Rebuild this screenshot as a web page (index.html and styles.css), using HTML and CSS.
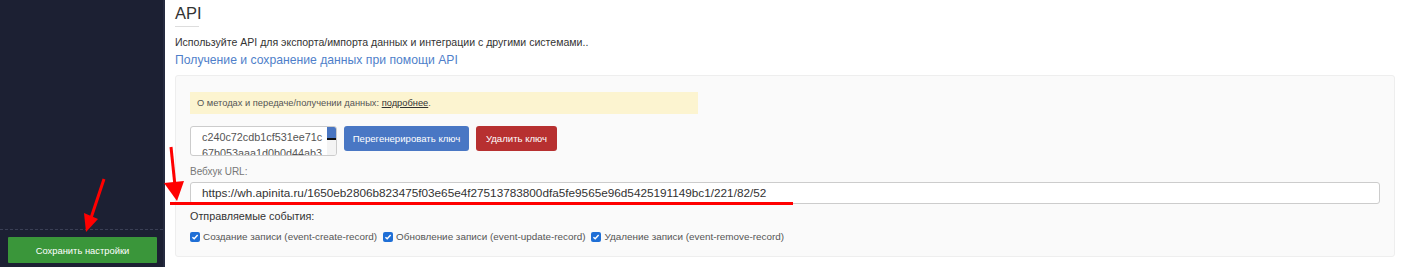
FILE: index.html
```html
<!DOCTYPE html>
<html lang="ru">
<head>
<meta charset="utf-8">
<link rel="stylesheet" href="styles.css">
</head>
<body>
<div class="layout">
  <aside class="sidebar">
    <div class="sidebar-fill"></div>
    <div class="sidebar-footer">
      <button class="btn-save">Сохранить настройки</button>
    </div>
  </aside>
  <main class="main">
    <h2 class="title">API</h2>
    <div class="title-rule"></div>
    <p class="intro">Используйте API для экспорта/импорта данных и интеграции с другими системами..</p>
    <a class="doc-link">Получение и сохранение данных при помощи API</a>
    <section class="panel">
      <div class="alert">О методах и передаче/получении данных: <span class="alert-link">подробнее</span>.</div>
      <div class="key-row">
        <div class="key-box">
          <div class="key-text">c240c72cdb1cf531ee71c<br>67b053aaa1d0b0d44ab3</div>
          <div class="key-scroll"><div class="key-thumb"></div><div class="key-grip"></div></div>
        </div>
        <button class="btn btn-blue">Перегенерировать ключ</button>
        <button class="btn btn-red">Удалить ключ</button>
      </div>
      <div class="label">Вебхук URL:</div>
      <div class="url-input">https://wh.apinita.ru/1650eb2806b823475f03e65e4f27513783800dfa5fe9565e96d5425191149bc1/221/82/52</div>
      <div class="events-title">Отправляемые события:</div>
      <div class="events">
        <label class="event"><span class="cb"><svg viewBox="0 0 10 10" width="8" height="8"><path d="M1.8 5.2 L4 7.3 L8.3 2.6" fill="none" stroke="#fff" stroke-width="1.8"/></svg></span>Создание записи (event-create-record)</label>
        <label class="event"><span class="cb"><svg viewBox="0 0 10 10" width="8" height="8"><path d="M1.8 5.2 L4 7.3 L8.3 2.6" fill="none" stroke="#fff" stroke-width="1.8"/></svg></span>Обновление записи (event-update-record)</label>
        <label class="event"><span class="cb"><svg viewBox="0 0 10 10" width="8" height="8"><path d="M1.8 5.2 L4 7.3 L8.3 2.6" fill="none" stroke="#fff" stroke-width="1.8"/></svg></span>Удаление записи (event-remove-record)</label>
      </div>
    </section>
  </main>
</div>
<svg class="annot" width="1420" height="267" viewBox="0 0 1420 267">
  <line x1="170" y1="203.5" x2="793" y2="203.5" stroke="#ff0000" stroke-width="3"/>
  <line x1="171" y1="147" x2="175" y2="186" stroke="#ff0000" stroke-width="3"/>
  <polygon points="164,183 184,181 177,201" fill="#ff0000"/>
  <line x1="104" y1="179" x2="91" y2="218" stroke="#ff0000" stroke-width="3"/>
  <polygon points="84,213 98,219 86,232" fill="#ff0000"/>
</svg>
</body>
</html>
```
FILE: styles.css
```css
* { box-sizing: border-box; }
html, body { margin: 0; padding: 0; }
body {
  width: 1420px;
  height: 267px;
  overflow: hidden;
  background: #fff;
  font-family: "Liberation Sans", Arial, sans-serif;
  color: #333;
  position: relative;
}
.layout { display: flex; height: 267px; }
.sidebar {
  width: 165px;
  flex: none;
  background: #1c2033;
  border-right: 2px solid #262b40;
  display: flex;
  flex-direction: column;
}
.sidebar-fill { flex: 1; }
.sidebar-footer {
  border-top: 1px dashed #3a3f55;
  padding: 7px 6px 4px 8px;
}
.btn-save {
  display: block;
  width: 149px;
  height: 26px;
  border: none;
  border-radius: 1px;
  background: #3a963a;
  color: #fff;
  font-family: inherit;
  font-size: 9.4px;
  padding: 0;
}
.main {
  flex: 1;
  padding: 0 26px 0 10px;
}
.title {
  margin: 4px 0 0;
  font-size: 16.5px;
  font-weight: normal;
  line-height: 18px;
  color: #333;
}
.title-rule {
  width: 24px;
  height: 1px;
  background: #ddd;
  margin-top: 4px;
}
.intro {
  margin: 8px 0 0;
  font-size: 10.55px;
  line-height: 14px;
}
.doc-link {
  display: block;
  margin-top: 3px;
  font-size: 12.2px;
  line-height: 16px;
  color: #4f7fca;
}
.panel {
  margin-top: 7px;
  background: #fafafa;
  border: 1px solid #eeeeee;
  border-radius: 3px;
  height: 182px;
  padding: 16px 14px 0 14px;
}
.alert {
  width: 508px;
  height: 22px;
  background: #fcf4d0;
  color: #555;
  font-size: 9.3px;
  line-height: 22px;
  padding-left: 7px;
}
.alert-link { color: #333; text-decoration: underline; }
.key-row {
  display: flex;
  gap: 7px;
  margin-top: 12px;
  align-items: flex-start;
}
.key-box {
  width: 147px;
  flex: none;
  height: 30px;
  background: #fff;
  border: 1px solid #ccc;
  border-radius: 3px;
  display: flex;
  overflow: hidden;
}
.key-text {
  flex: 1;
  min-width: 0;
  font-size: 10.8px;
  line-height: 16px;
  color: #555;
  padding: 2px 0 0 11px;
  white-space: nowrap;
  overflow: hidden;
}
.key-scroll {
  width: 9px;
  flex: none;
  display: flex;
  flex-direction: column;
  background: #f4f4f4;
}
.key-thumb {
  flex: none;
  height: 13px;
  background: #4a76c2;
  border-bottom: 2px solid #111;
}
.key-grip { flex: 1; }
.btn {
  height: 25px;
  border: none;
  border-radius: 3px;
  color: #fff;
  font-family: inherit;
  font-size: 9.6px;
  padding: 0;
  white-space: nowrap;
}
.btn-blue { background: #4977c4; width: 125px; }
.btn-red { background: #b73030; width: 81px; }
.label {
  margin-top: 9px;
  font-size: 10px;
  line-height: 14px;
  color: #777;
}
.url-input {
  margin-top: 3px;
  width: 1190px;
  height: 22px;
  background: #fff;
  border: 1px solid #ccc;
  border-radius: 3px;
  font-size: 11.75px;
  line-height: 20px;
  padding-left: 11px;
  color: #333;
  white-space: nowrap;
}
.events-title {
  margin-top: 5px;
  font-size: 10.8px;
  line-height: 14px;
  color: #333;
}
.events {
  display: flex;
  gap: 6px;
  margin-top: 7px;
}
.event {
  display: flex;
  align-items: center;
  font-size: 9.9px;
  line-height: 14px;
  color: #555;
}
.cb {
  width: 10px;
  height: 10px;
  background: #1f6fd6;
  border-radius: 2px;
  margin-right: 3px;
  display: flex;
  align-items: center;
  justify-content: center;
}
.annot {
  position: absolute;
  left: 0;
  top: 0;
  pointer-events: none;
}
```
